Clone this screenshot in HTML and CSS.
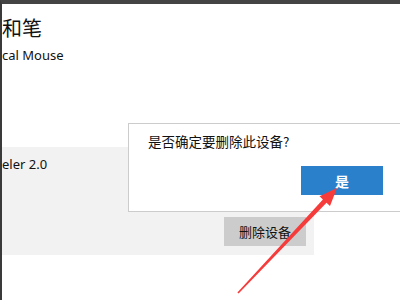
FILE: index.html
```html
<!DOCTYPE html>
<html lang="zh-CN">
<head>
    <meta charset="UTF-8">
    <title>删除设备</title>
    <link rel="stylesheet" href="styles.css">
</head>
<body>
    <div class="window">
        <h1 class="title">和笔</h1>
        <p class="subtitle">cal Mouse</p>
        <div class="device-panel">
            <p class="device-name">eler 2.0</p>
            <div class="panel-actions">
                <button class="remove-btn">删除设备</button>
            </div>
        </div>

        <!-- confirm popup -->
        <div class="confirm">
            <p class="confirm-text">是否确定要删除此设备?</p>
            <div class="confirm-actions">
                <button class="yes-btn">是</button>
            </div>
        </div>

        <svg class="arrow" width="400" height="300" viewBox="0 0 400 300">
            <polygon fill="#f63b3b" points="337,188 330,206 326.5,202.8 238.6,293.6 237.4,292.4 322.9,199.4 319.5,196.2"/>
        </svg>
    </div>
</body>
</html>
```

FILE: styles.css
```css
body {
    margin: 0;
    background-color: #fff;
    font-family: "Noto Sans", "Noto Sans CJK SC", sans-serif;
    color: #111;
}
.window {
    position: relative;
    height: 300px;
    box-sizing: border-box;
    border-top: 4px solid #444;
    border-left: 2px solid #3a3a3a;
    overflow: hidden;
}
.title {
    margin: 0;
    padding-top: 10px;
    font-size: 20px;
    font-weight: normal;
    line-height: 28px;
    font-family: "Noto Sans CJK SC", sans-serif;
}
.subtitle {
    margin: 4px 0 0;
    font-size: 13px;
    line-height: 18px;
}
.device-panel {
    margin-top: 83px;
    width: 312px;
    height: 108px;
    box-sizing: border-box;
    padding: 8px 8px 0 0;
    background-color: #f2f2f2;
    display: flex;
    flex-direction: column;
}
.device-name {
    margin: 0;
    font-size: 13px;
    line-height: 18px;
}
.panel-actions {
    margin-top: auto;
    margin-bottom: 9px;
    display: flex;
    justify-content: flex-end;
}
.remove-btn {
    width: 82px;
    height: 29px;
    border: none;
    background-color: #cccccc;
    font-family: "Noto Sans CJK SC", sans-serif;
    font-size: 13px;
    color: #111;
    padding: 0;
}
.confirm {
    position: absolute;
    left: 126px;
    top: 119px;
    width: 290px;
    height: 89px;
    box-sizing: border-box;
    border: 1px solid #cccccc;
    background-color: #fff;
    padding: 7px 0 0 19px;
}
.confirm-text {
    margin: 0;
    font-family: "Noto Sans CJK SC", sans-serif;
    font-size: 13.5px;
    line-height: 20px;
}
.confirm-actions {
    margin-top: 15px;
    padding-left: 153px;
}
.yes-btn {
    width: 82px;
    height: 29px;
    border: none;
    background-color: #2b80cc;
    color: #fff;
    font-family: "Noto Sans CJK SC", sans-serif;
    font-size: 14px;
    font-weight: bold;
    padding: 0;
}
.arrow {
    position: absolute;
    left: -2px;
    top: -4px;
}
```
